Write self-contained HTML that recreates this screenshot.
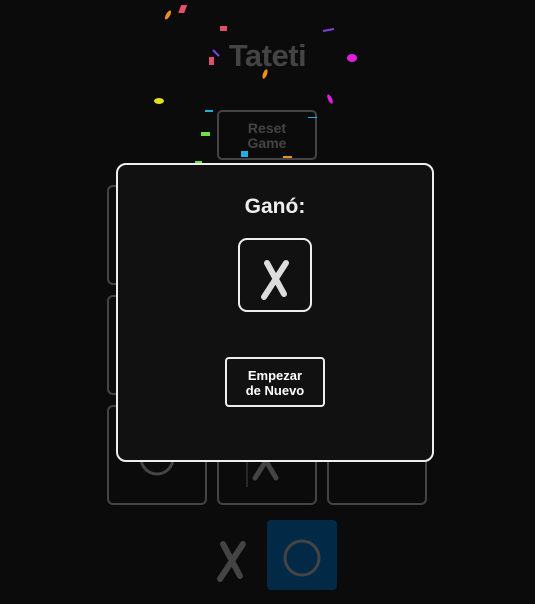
<!DOCTYPE html><html><head><style>
body{margin:0;width:535px;height:604px;background:#0b0b0b;font-family:"Liberation Sans",sans-serif;position:relative;overflow:hidden}
.a{position:absolute}
.cell{position:absolute;width:96px;height:96px;border:2px solid #444;border-radius:6px;box-sizing:content-box}
</style></head><body>
<div class="a" style="left:0;width:535px;top:38px;text-align:center;font-weight:bold;font-size:31px;color:#444;letter-spacing:-0.5px">Tateti</div>
<div class="a" style="left:217px;top:110px;width:96px;border:2px solid #444;border-radius:5px;color:#444;font-weight:bold;font-size:14px;text-align:center;line-height:15px;padding-top:9px;box-sizing:content-box;height:37px">Reset<br>Game</div>
<div class="cell" style="left:107px;top:185px"></div><div class="cell" style="left:217px;top:185px"></div><div class="cell" style="left:327px;top:185px"></div>
<div class="cell" style="left:107px;top:295px"></div><div class="cell" style="left:217px;top:295px"></div><div class="cell" style="left:327px;top:295px"></div>
<div class="cell" style="left:107px;top:405px"></div><div class="cell" style="left:217px;top:405px"></div><div class="cell" style="left:327px;top:405px"></div>
<svg class="a" style="left:0;top:0" width="535" height="604">
<circle cx="157" cy="458" r="16" fill="none" stroke="#444" stroke-width="3"/>
<path d="M255 478 L266 461 L276 478" stroke="#444" stroke-width="5" fill="none" stroke-linecap="round"/>
<line x1="247" y1="455" x2="247" y2="487" stroke="#444" stroke-width="1"/>
<path d="M223 544 L240 576 M243 544 L220 579" stroke="#444" stroke-width="6" stroke-linecap="round"/>
<rect x="267" y="520" width="70" height="70" rx="4" fill="#022a46"/>
<circle cx="302" cy="558" r="17" fill="none" stroke="#444" stroke-width="3"/>
<ellipse cx="352" cy="58" rx="5" ry="4" fill="#e020e0"/>
<ellipse cx="159" cy="101" rx="5" ry="3" fill="#e0e020"/>
<ellipse cx="217" cy="178" rx="3" ry="5" fill="#e020e0"/>
<ellipse cx="330" cy="99" rx="2" ry="5" fill="#e020e0" transform="rotate(-25 330 99)"/>
<ellipse cx="265" cy="74" rx="2" ry="5" fill="#f0901c" transform="rotate(20 265 74)"/>
<ellipse cx="168" cy="15" rx="2" ry="5" fill="#f0901c" transform="rotate(30 168 15)"/>
<rect x="183" y="5" width="6" height="8" fill="#e0506a" transform="skewX(-20)"/>
<rect x="220" y="26" width="7" height="5" fill="#e0506a"/>
<rect x="209" y="57" width="5" height="8" fill="#e0506a"/>
<rect x="201" y="132" width="9" height="4" fill="#70e040"/>
<rect x="195" y="161" width="7" height="6" fill="#70e040"/>
<rect x="241" y="151" width="7" height="6" fill="#20b0e0"/>
<rect x="205" y="110" width="8" height="2" fill="#20b0e0"/>
<rect x="308" y="117" width="9" height="1" fill="#20b0e0"/>
<rect x="283" y="156" width="9" height="2" fill="#f0901c"/>
<line x1="213" y1="50" x2="219" y2="56" stroke="#8040e0" stroke-width="2"/>
<line x1="323" y1="31" x2="334" y2="29" stroke="#8040e0" stroke-width="2"/>
</svg>
<div class="a" style="left:116px;top:163px;width:318px;height:299px;box-sizing:border-box;background:#111;border:2px solid #eee;border-radius:10px"></div>
<div class="a" style="left:116px;top:195px;width:318px;text-align:center;color:#eee;font-weight:bold;font-size:21px">Ganó:</div>
<div class="a" style="left:238px;top:238px;width:74px;height:74px;box-sizing:border-box;border:2px solid #eee;border-radius:9px"></div>
<svg class="a" style="left:238px;top:238px" width="74" height="74"><path d="M29 25 L46 56 M48 25 L26 59" stroke="#ddd" stroke-width="6" stroke-linecap="round"/></svg>
<div class="a" style="left:225px;top:357px;width:100px;height:50px;box-sizing:border-box;border:2px solid #eee;border-radius:4px;color:#fff;font-weight:bold;font-size:13px;text-align:center;line-height:15px;padding-top:9px">Empezar<br>de Nuevo</div>
</body></html>
